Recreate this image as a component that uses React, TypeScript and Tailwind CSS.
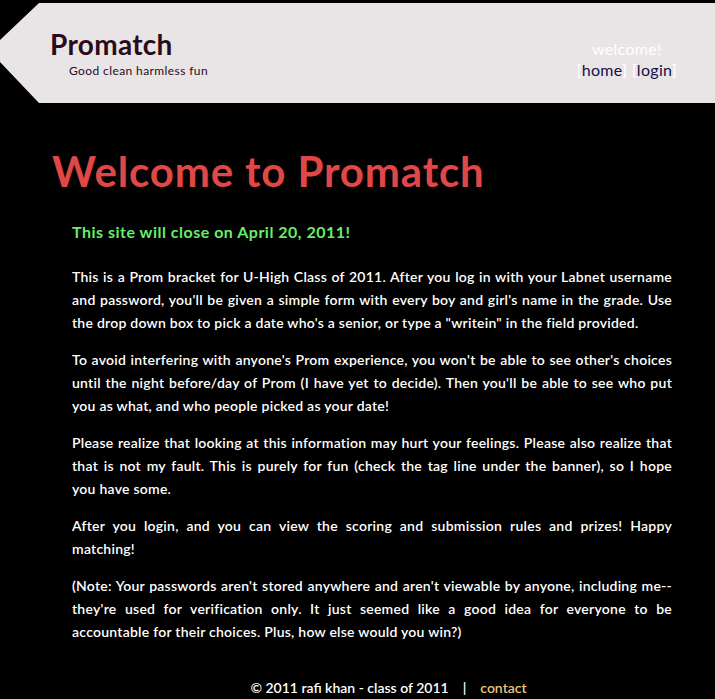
import React from "react";

const paragraphs = [
  "This is a Prom bracket for U-High Class of 2011. After you log in with your Labnet username and password, you'll be given a simple form with every boy and girl's name in the grade. Use the drop down box to pick a date who's a senior, or type a \"writein\" in the field provided.",
  "To avoid interfering with anyone's Prom experience, you won't be able to see other's choices until the night before/day of Prom (I have yet to decide). Then you'll be able to see who put you as what, and who people picked as your date!",
  "Please realize that looking at this information may hurt your feelings. Please also realize that that is not my fault. This is purely for fun (check the tag line under the banner), so I hope you\u00a0have some.",
  "After you login, and you can view the scoring and submission rules and prizes! Happy matching!",
  "(Note: Your passwords aren't stored anywhere and aren't viewable by anyone, including me--they're used for verification only. It just seemed like a good idea for everyone to be accountable for their choices. Plus, how else would you win?)",
];

export default function App() {
  return (
    <div className="min-h-[699px] bg-black pt-[3px] font-['Lato','Liberation_Sans',sans-serif]">
      <header className="flex h-[100px] justify-between bg-[#e9e4e6] [clip-path:polygon(39px_0,100%_0,100%_100%,39px_100%,0_59px,0_37px)]">
        <div className="pl-[50px] pt-[24px]">
          <h1 className="text-[28px] font-bold leading-[34px] tracking-[0.3px] text-[#2a0b1b]">Promatch</h1>
          <p className="ml-[19px] mt-[3px] text-[12px] leading-[14px] tracking-[0.4px] text-[#2a0b1b]">
            Good clean harmless fun
          </p>
        </div>
        <div className="pr-[38px] pt-[35px] text-center text-[16px] leading-[21px] tracking-[0.3px]">
          <div className="text-white">welcome!</div>
          <div className="text-[#150f4a]">
            <span className="text-white">[</span>
            <a href="#">home</a>
            <span className="text-white">]</span>{" "}
            <span className="text-white">[</span>
            <a href="#">login</a>
            <span className="text-white">]</span>
          </div>
        </div>
      </header>

      <main className="pl-[52px] pt-[43px]">
        <h2 className="text-[42px] font-bold leading-[50px] tracking-[0.85px] text-[#e04747]">Welcome to Promatch</h2>
        <div className="w-[600px] pl-[20px] box-content">
          <p className="mt-[26px] text-[16px] font-bold leading-[20px] tracking-[0.5px] text-[#66ee66]">
            This site will close on April 20, 2011!
          </p>
          <div className="mt-[23px] flex flex-col gap-[14px]">
            {paragraphs.map((p) => (
              <p key={p.slice(0, 12)} className="text-justify text-[14px] font-semibold leading-[23px] tracking-[0.25px] text-white">
                {p}
              </p>
            ))}
          </div>
        </div>
      </main>

      <footer className="mt-[35px] flex justify-center gap-[14px] pl-[62px] text-[14px] font-semibold leading-[20px] text-white">
        <span>© 2011 rafi khan - class of 2011</span>
        <span>|</span>
        <a href="#" className="text-[#ecc774]">contact</a>
      </footer>
    </div>
  );
}
